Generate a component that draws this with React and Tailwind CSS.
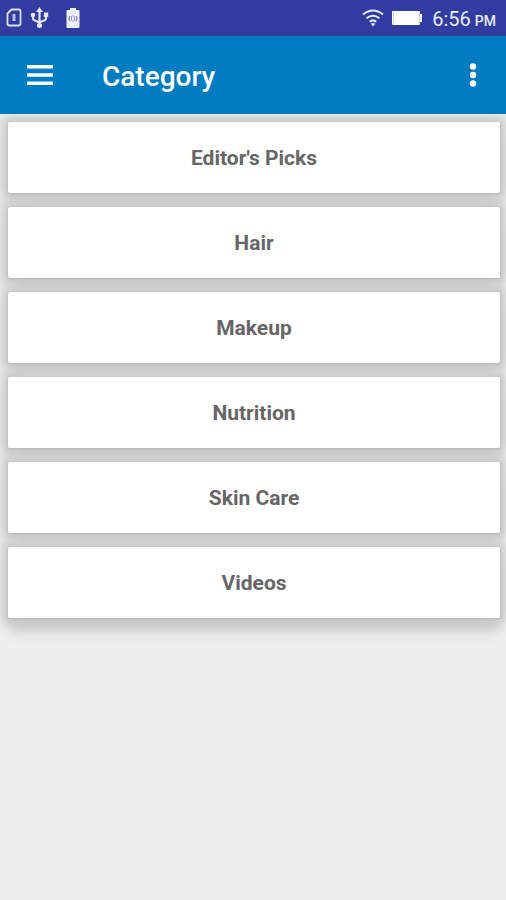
const categories = ["Editor's Picks", 'Hair', 'Makeup', 'Nutrition', 'Skin Care', 'Videos'];

function SimIcon() {
  return (
    <svg width="16" height="20" viewBox="0 0 16 20" fill="none" aria-hidden="true">
      <path d="M5.5 1.5h7.5a1.5 1.5 0 0 1 1.5 1.5v13a1.5 1.5 0 0 1-1.5 1.5H3A1.5 1.5 0 0 1 1.500 16V5.500z" stroke="#dfe2f7" strokeWidth="1.800" strokeLinejoin="round" />
      <path d="M8 6v7" stroke="#b9bfe8" strokeWidth="3" />
    </svg>
  );
}

function UsbIcon() {
  return (
    <svg width="20" height="22" viewBox="0 0 20 22" fill="none" aria-hidden="true">
      <path d="M9.500 3v15M3 9v2q0 2 2 2.500l4.500 2M16 8v3q0 2-2 2.500l-4.500 2" stroke="#e6e8fa" strokeWidth="2.200" />
      <path d="M9.500 0l3.500 5H6z" fill="#e6e8fa" />
      <circle cx="3" cy="8" r="2.300" fill="#e6e8fa" />
      <path d="M13.800 5.500h4.400v4.400h-4.400z" fill="#e6e8fa" />
      <circle cx="9.500" cy="18.500" r="2.500" fill="#e6e8fa" />
    </svg>
  );
}

function BatterySaverIcon() {
  return (
    <svg width="14" height="20" viewBox="0 0 14 20" fill="none" aria-hidden="true">
      <path d="M4 0h6v2h2.500q1 0 1 1v16q0 1-1 1h-11q-1 0-1-1V3q0-1 1-1H4z" fill="#eef0fb" />
      <path d="M4 8q-2 2.500 0 5M10 8q2 2.500 0 5" stroke="#8088bd" strokeWidth="1.200" />
      <rect x="5.500" y="8" width="3" height="5" rx="1" stroke="#9299c8" />
    </svg>
  );
}

function WifiIcon() {
  return (
    <svg width="22" height="18" viewBox="0 0 22 18" fill="none" aria-hidden="true">
      <path d="M1 5.500q10-8 20 0M4.500 9.200q6.500-5 13 0M7.700 12.700q3.300-2.600 6.600 0" stroke="#e9ebfa" strokeWidth="2" />
      <path d="M8.800 14.800q2.200-1.600 4.400 0L11 17.500z" fill="#e9ebfa" />
    </svg>
  );
}

function BatteryIcon() {
  return (
    <svg width="30" height="14" viewBox="0 0 30 14" aria-hidden="true">
      <rect width="28" height="14" rx="1" fill="#ffffff" />
      <path d="M28 3h2v8h-2z" fill="#ffffff" />
      <path d="M1.500 1.500v11M27.500 1.500v11" stroke="#c5c9e6" />
    </svg>
  );
}

function StatusBar() {
  return (
    <div className="flex h-9 items-center justify-between bg-[#303c9f] pl-1.5 pr-2.5 text-[#e9ebfa]">
      <div className="flex items-center">
        <SimIcon />
        <span className="ml-2 mr-4 flex"><UsbIcon /></span>
        <BatterySaverIcon />
      </div>
      <div className="flex items-center">
        <WifiIcon />
        <span className="ml-2 mr-2.5 flex"><BatteryIcon /></span>
        <p className="flex items-baseline gap-1 pt-0.5 text-xl leading-6">
          6:56 <span className="text-sm font-medium">PM</span>
        </p>
      </div>
    </div>
  );
}

export default function App() {
  return (
    <div className="min-h-screen bg-[#eeeeee] font-['Roboto',sans-serif]">
      <StatusBar />
      <header className="relative z-10 flex h-[78px] items-center bg-[#007cc0] pl-[26px] pr-5 text-white">
        <button type="button" aria-label="Open menu">
          <svg width="28" height="20" viewBox="0 0 28 20" fill="#ffffff" aria-hidden="true">
            <path d="M1 0h26v3.500H1zM1 8.200h26v3.500H1zM1 16.500h26V20H1z" />
          </svg>
        </button>
        <h1 className="ml-12 grow pt-1 text-[28px] font-medium leading-8">Category</h1>
        <button type="button" aria-label="More options" className="px-2">
          <svg width="10" height="24" viewBox="0 0 10 24" fill="#ffffff" aria-hidden="true">
            <circle cx="5" cy="3.500" r="3.200" />
            <circle cx="5" cy="12" r="3.200" />
            <circle cx="5" cy="20.500" r="3.200" />
          </svg>
        </button>
      </header>
      <main className="pl-2 pr-1.5 pt-2">
        <ul className="flex flex-col gap-3.5">
          {categories.map((name) => (
            <li key={name}>
              <button
                type="button"
                className="h-[71px] w-full rounded-xs bg-white text-[21px] leading-7 font-bold text-[#666666] shadow-[0_1px_3px_#b4b4b4,0_0_8px_6px_#cccccc,0_15px_12px_-2px_#c8c8c8]"
              >
                {name}
              </button>
            </li>
          ))}
        </ul>
      </main>
    </div>
  );
}
